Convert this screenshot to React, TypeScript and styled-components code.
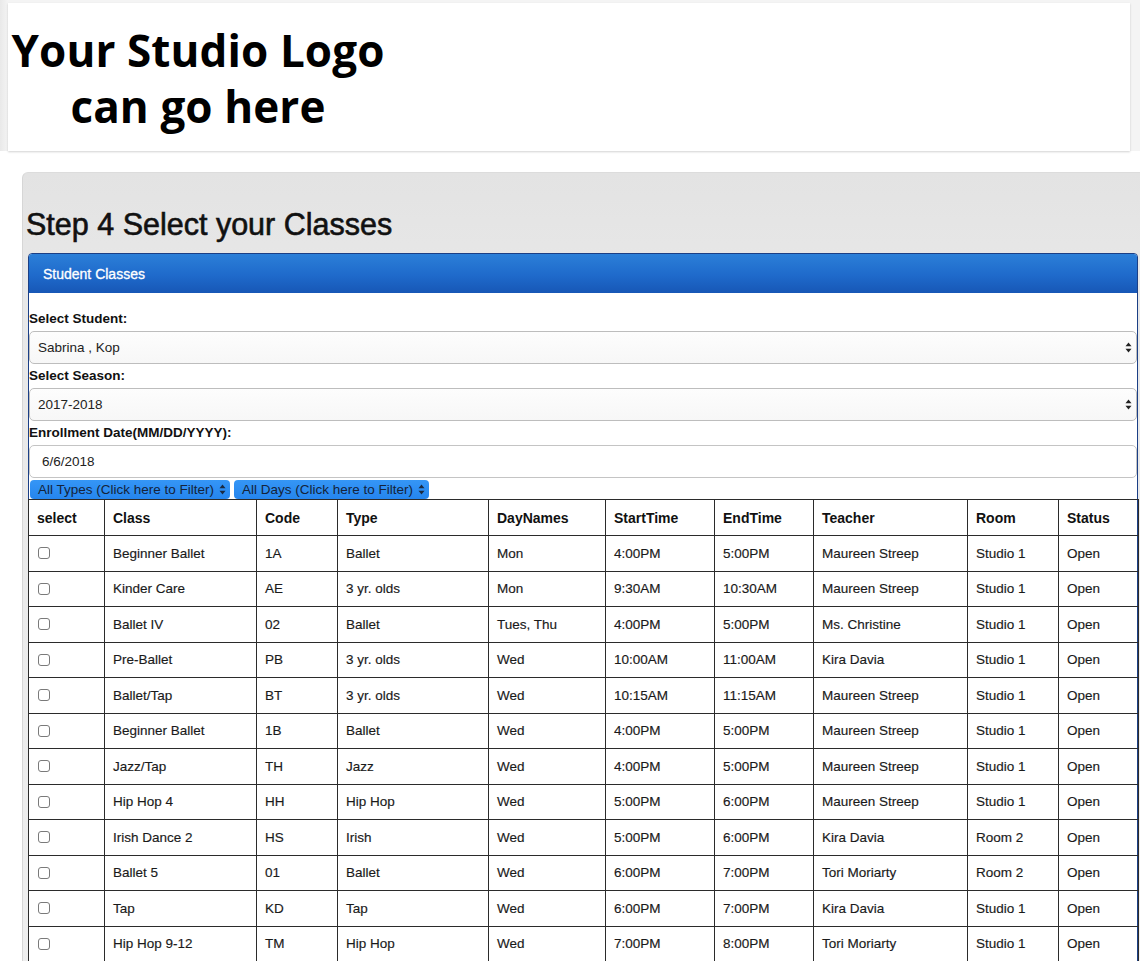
import styled, { createGlobalStyle } from 'styled-components';

const GlobalStyle = createGlobalStyle`
  html, body {
    margin: 0;
    padding: 0;
    background: #ffffff;
    overflow: hidden;
  }
  body {
    font-family: "Liberation Sans", Arial, sans-serif;
    color: #111;
  }
`;

type ClassRow = {
  name: string;
  code: string;
  type: string;
  days: string;
  start: string;
  end: string;
  teacher: string;
  room: string;
  status: string;
};

const classes: ClassRow[] = [
  { name: 'Beginner Ballet', code: '1A', type: 'Ballet', days: 'Mon', start: '4:00PM', end: '5:00PM', teacher: 'Maureen Streep', room: 'Studio 1', status: 'Open' },
  { name: 'Kinder Care', code: 'AE', type: '3 yr. olds', days: 'Mon', start: '9:30AM', end: '10:30AM', teacher: 'Maureen Streep', room: 'Studio 1', status: 'Open' },
  { name: 'Ballet IV', code: '02', type: 'Ballet', days: 'Tues, Thu', start: '4:00PM', end: '5:00PM', teacher: 'Ms. Christine', room: 'Studio 1', status: 'Open' },
  { name: 'Pre-Ballet', code: 'PB', type: '3 yr. olds', days: 'Wed', start: '10:00AM', end: '11:00AM', teacher: 'Kira Davia', room: 'Studio 1', status: 'Open' },
  { name: 'Ballet/Tap', code: 'BT', type: '3 yr. olds', days: 'Wed', start: '10:15AM', end: '11:15AM', teacher: 'Maureen Streep', room: 'Studio 1', status: 'Open' },
  { name: 'Beginner Ballet', code: '1B', type: 'Ballet', days: 'Wed', start: '4:00PM', end: '5:00PM', teacher: 'Maureen Streep', room: 'Studio 1', status: 'Open' },
  { name: 'Jazz/Tap', code: 'TH', type: 'Jazz', days: 'Wed', start: '4:00PM', end: '5:00PM', teacher: 'Maureen Streep', room: 'Studio 1', status: 'Open' },
  { name: 'Hip Hop 4', code: 'HH', type: 'Hip Hop', days: 'Wed', start: '5:00PM', end: '6:00PM', teacher: 'Maureen Streep', room: 'Studio 1', status: 'Open' },
  { name: 'Irish Dance 2', code: 'HS', type: 'Irish', days: 'Wed', start: '5:00PM', end: '6:00PM', teacher: 'Kira Davia', room: 'Room 2', status: 'Open' },
  { name: 'Ballet 5', code: '01', type: 'Ballet', days: 'Wed', start: '6:00PM', end: '7:00PM', teacher: 'Tori Moriarty', room: 'Room 2', status: 'Open' },
  { name: 'Tap', code: 'KD', type: 'Tap', days: 'Wed', start: '6:00PM', end: '7:00PM', teacher: 'Kira Davia', room: 'Studio 1', status: 'Open' },
  { name: 'Hip Hop 9-12', code: 'TM', type: 'Hip Hop', days: 'Wed', start: '7:00PM', end: '8:00PM', teacher: 'Tori Moriarty', room: 'Studio 1', status: 'Open' },
];

const columns = [
  { label: 'select', width: 76 },
  { label: 'Class', width: 152 },
  { label: 'Code', width: 81 },
  { label: 'Type', width: 151 },
  { label: 'DayNames', width: 117 },
  { label: 'StartTime', width: 109 },
  { label: 'EndTime', width: 99 },
  { label: 'Teacher', width: 154 },
  { label: 'Room', width: 91 },
  { label: 'Status', width: 80 },
];

// little up/down arrows of a mac select box
const UpDown = ({ color = '#222' }: { color?: string }) => (
  <svg width="7" height="11" viewBox="0 0 7 11">
    <path d="M3.5 0.5 L6.5 4.3 L0.5 4.3 Z" fill={color} />
    <path d="M3.5 10.5 L6.5 6.7 L0.5 6.7 Z" fill={color} />
  </svg>
);

const App = () => {
  return (
    <>
      <GlobalStyle />
      <S.Page>
        <S.HeaderBand>
          <S.LogoBox>
            <S.Logo>
              Your Studio Logo
              <br />
              can go here
            </S.Logo>
          </S.LogoBox>
        </S.HeaderBand>

        <S.Jumbotron>
          <S.Title>Step 4 Select your Classes</S.Title>
          <S.Panel>
            <S.PanelHeading>Student Classes</S.PanelHeading>
            <S.PanelBody>
              <S.Label>Select Student:</S.Label>
              <S.SelectBox>
                <span>Sabrina , Kop</span>
                <UpDown />
              </S.SelectBox>
              <S.Label>Select Season:</S.Label>
              <S.SelectBox>
                <span>2017-2018</span>
                <UpDown />
              </S.SelectBox>
              <S.Label>Enrollment Date(MM/DD/YYYY):</S.Label>
              <S.TextBox>6/6/2018</S.TextBox>
              <S.FilterRow>
                <S.FilterButton>
                  All Types (Click here to Filter) <UpDown color="#1b2a40" />
                </S.FilterButton>
                <S.FilterButton>
                  All Days (Click here to Filter) <UpDown color="#1b2a40" />
                </S.FilterButton>
              </S.FilterRow>
              <S.Table>
                <colgroup>
                  {columns.map((c) => (
                    <col key={c.label} style={{ width: c.width }} />
                  ))}
                </colgroup>
                <thead>
                  <S.HeadRow>
                    {columns.map((c) => (
                      <S.Th key={c.label}>{c.label}</S.Th>
                    ))}
                  </S.HeadRow>
                </thead>
                <tbody>
                  {classes.map((row, i) => (
                    <S.Row key={i}>
                      <S.Td>
                        <S.Check type="checkbox" />
                      </S.Td>
                      <S.Td>{row.name}</S.Td>
                      <S.Td>{row.code}</S.Td>
                      <S.Td>{row.type}</S.Td>
                      <S.Td>{row.days}</S.Td>
                      <S.Td>{row.start}</S.Td>
                      <S.Td>{row.end}</S.Td>
                      <S.Td>{row.teacher}</S.Td>
                      <S.Td>{row.room}</S.Td>
                      <S.Td>{row.status}</S.Td>
                    </S.Row>
                  ))}
                </tbody>
              </S.Table>
            </S.PanelBody>
          </S.Panel>
        </S.Jumbotron>
      </S.Page>
    </>
  );
};

export default App;

const S = {
  Page: styled.div`
    width: 1140px;
    min-height: 961px;
  `,
  HeaderBand: styled.div`
    background: linear-gradient(to right, #e9e9e9 0, #f4f4f4 8px, #f4f4f4 100%);
    padding: 3px 10px 0 8px;
  `,
  LogoBox: styled.div`
    height: 148px;
    background: #fff;
    box-shadow: 0 1px 2px rgba(0, 0, 0, 0.18);
    padding: 19px 0 0 2px;
    box-sizing: border-box;
  `,
  Logo: styled.div`
    width: 376px;
    text-align: center;
    font-family: "Open Sans", "Noto Sans", sans-serif;
    font-weight: 700;
    font-size: 44px;
    line-height: 56px;
    color: #000;
    letter-spacing: 0.1px;
  `,
  Jumbotron: styled.div`
    margin: 21px 0 0 22px;
    padding: 35px 2px 0 6px;
    background: linear-gradient(to bottom, #e3e3e3 0, #e8e8e8 120px, #efefef 100%);
    border-left: 1px solid #d6d6d6;
    border-top: 1px solid #dcdcdc;
    border-radius: 6px 0 0 0;
    min-height: 790px;
  `,
  Title: styled.h1`
    margin: 0 0 12px -3px;
    font-size: 30.5px;
    font-weight: normal;
    line-height: 33px;
    color: #111;
    -webkit-text-stroke: 0.6px #111;
  `,
  Panel: styled.div`
    margin-left: -1px;
    background: #fff;
    border: 1px solid #1b3f86;
    border-radius: 4px 4px 0 0;
  `,
  PanelHeading: styled.div`
    height: 39px;
    display: flex;
    align-items: center;
    padding-left: 14px;
    background: linear-gradient(to bottom, #2b7fd8 0, #1f6acb 55%, #1757b6 100%);
    border-radius: 3px 3px 0 0;
    color: #fff;
    font-size: 14px;
    -webkit-text-stroke: 0.3px #fff;
  `,
  PanelBody: styled.div`
    padding-top: 14px;
  `,
  Label: styled.div`
    font-size: 13.5px;
    font-weight: bold;
    line-height: 24px;
    color: #111;
  `,
  SelectBox: styled.div`
    height: 33px;
    box-sizing: border-box;
    display: flex;
    align-items: center;
    justify-content: space-between;
    padding: 0 4px 0 8px;
    border: 1px solid #bdbdbd;
    border-radius: 5px;
    background: linear-gradient(to bottom, #fdfdfd, #f7f7f7);
    font-size: 13.5px;
    color: #222;
  `,
  TextBox: styled.div`
    height: 33px;
    box-sizing: border-box;
    display: flex;
    align-items: center;
    padding-left: 12px;
    border: 1px solid #c4c4c4;
    border-radius: 5px;
    background: #fff;
    font-size: 13.5px;
    color: #222;
  `,
  FilterRow: styled.div`
    display: flex;
    gap: 4px;
    margin-top: 2px;
    padding-left: 1px;
  `,
  FilterButton: styled.div`
    height: 19px;
    display: flex;
    align-items: center;
    gap: 5px;
    padding: 0 4px 0 8px;
    border-radius: 4px;
    background: linear-gradient(to bottom, #3596f6, #2585ee);
    color: #14233a;
    font-size: 13.5px;
    white-space: nowrap;
  `,
  Table: styled.table`
    width: 1110px;
    margin-left: -1px;
    table-layout: fixed;
    border-collapse: collapse;
    font-size: 13.5px;
    color: #1a1a1a;
  `,
  HeadRow: styled.tr`
    height: 36px;
  `,
  Row: styled.tr`
    height: 35.5px;
  `,
  Th: styled.th`
    border: 1px solid #2b2b2b;
    text-align: left;
    padding: 0 8px;
    font-size: 14px;
    font-weight: bold;
    color: #111;
  `,
  Td: styled.td`
    border: 1px solid #2b2b2b;
    padding: 0 8px;
    white-space: nowrap;
    -webkit-text-stroke: 0.15px #1a1a1a;
  `,
  Check: styled.input`
    appearance: none;
    -webkit-appearance: none;
    display: block;
    width: 12px;
    height: 12px;
    margin: 0 0 0 1px;
    border: 1px solid #7a7a7a;
    border-radius: 3px;
    background: #fff;
  `,
};
